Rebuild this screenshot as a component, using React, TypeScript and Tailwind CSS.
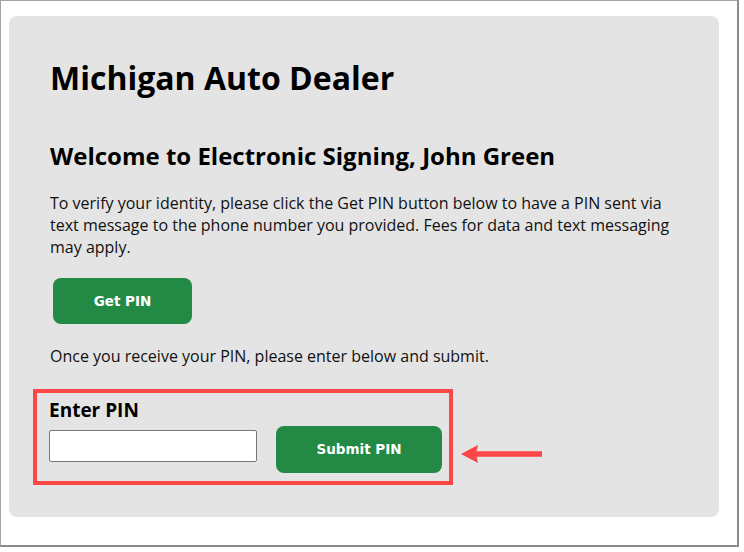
export default function App() {
  return (
    <div className="w-[744px] h-[552px] bg-white" style={{ fontFamily: '"Open Sans", sans-serif' }}>
      <div className="w-[739px] h-[547px] border-l border-t border-[#a3a3a3] border-r-2 border-b-2 border-r-[#8c8c8c] border-b-[#8c8c8c] pt-[15px] pl-2">
        <div className="w-[710px] h-[501px] rounded-lg bg-[#e4e4e4] pl-[41px] pt-[42px] text-black">
          <h1 className="text-[32px] font-bold leading-[40px]">Michigan Auto Dealer</h1>
          <h2 className="mt-[42px] text-[24px] font-bold leading-[32px]">Welcome to Electronic Signing, John Green</h2>
          <p className="mt-[20px] w-[630px] text-[16px] leading-[22px] text-[#111]">
            To verify your identity, please click the Get PIN button below to have a PIN sent via text message to the phone number you provided. Fees for data and text messaging may apply.
          </p>
          <button
            className="mt-[20px] ml-[3px] w-[139px] h-[46px] rounded-lg bg-[#228a44] text-white text-[13.5px] font-bold"
            style={{ fontFamily: '"DejaVu Sans", Verdana, sans-serif' }}
          >
            Get PIN
          </button>
          <p className="mt-[21px] text-[16px] leading-[22px] text-[#111]">Once you receive your PIN, please enter below and submit.</p>
          <div className="mt-[22px] -ml-[17px] flex items-start">
            <div className="w-[420px] h-[96px] border-4 border-[#fd4646] pl-[12px] pt-[4px]">
              <div className="text-[19px] font-bold leading-[26px]">Enter PIN</div>
              <div className="mt-[3px] flex items-start">
                <input className="mt-[4px] w-[208px] h-[32px] bg-white border border-[#767676] rounded-[2px] outline-none" />
                <button
                  className="ml-[19px] w-[166px] h-[47px] rounded-lg bg-[#228a44] text-white text-[13.5px] font-bold"
                  style={{ fontFamily: '"DejaVu Sans", Verdana, sans-serif' }}
                >
                  Submit PIN
                </button>
              </div>
            </div>
            <svg className="ml-[7px] mt-[55px]" width="84" height="20" viewBox="0 0 84 20">
              <line x1="16" y1="10" x2="82" y2="10" stroke="#fd4646" strokeWidth="5.5" />
              <polygon points="1,10 18,1 16,10 18,19" fill="#fd4646" />
            </svg>
          </div>
        </div>
      </div>
    </div>
  );
}
